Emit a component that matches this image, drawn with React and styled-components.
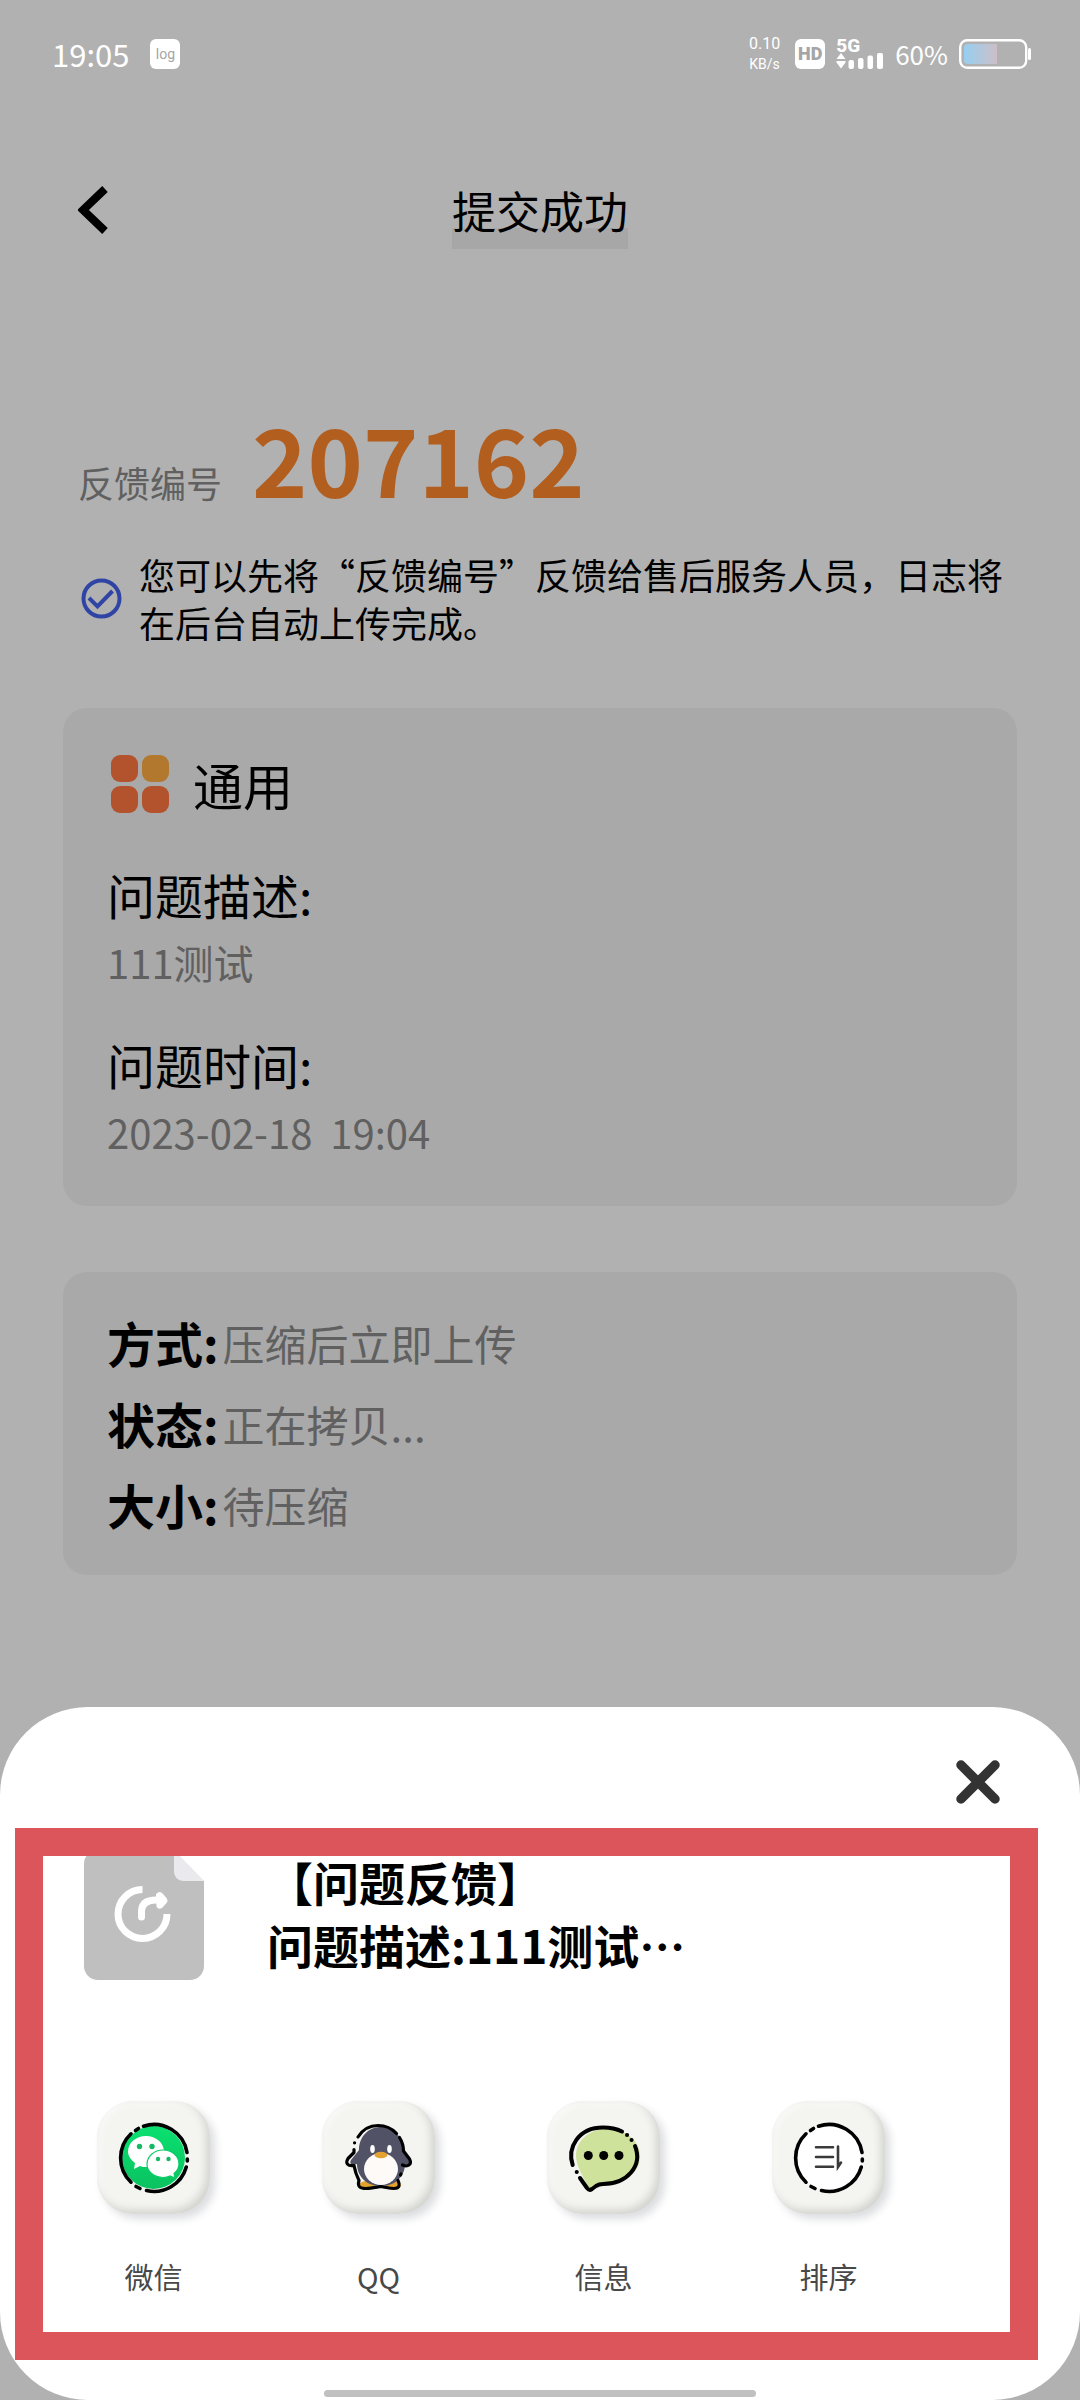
import React from 'react';
import styled, { createGlobalStyle } from 'styled-components';

const details = [
  { id: 0, label: '问题描述:', value: '111测试' },
  { id: 1, label: '问题时间:', value: '2023-02-18  19:04' },
];

const uploads = [
  { id: 0, label: '方式:', value: '压缩后立即上传' },
  { id: 1, label: '状态:', value: '正在拷贝...' },
  { id: 2, label: '大小:', value: '待压缩' },
];

const GlobalStyle = createGlobalStyle`
  * {
    box-sizing: border-box;
  }
  body {
    margin: 0;
    background: #b1b1b1;
    font-family: "Noto Sans CJK SC", sans-serif;
    color: #000;
  }
  h1, h2, p, dl, dt, dd, ul {
    margin: 0;
    padding: 0;
    font-weight: 400;
  }
  button {
    border: 0;
    padding: 0;
    background: none;
    font-family: inherit;
    cursor: pointer;
  }
  svg {
    display: block;
    flex-shrink: 0;
  }
`;

const Page = styled.div`
  min-height: 100vh;
  display: flex;
  flex-direction: column;
`;

const StatusBar = styled.div`
  display: flex;
  align-items: center;
  justify-content: space-between;
  height: 108px;
  padding: 0 48px 0 52px;
  color: #fff;
`;

const StatusGroup = styled.div`
  display: flex;
  align-items: center;
  gap: ${props => props.$gap}px;
`;

const Clock = styled.time`
  font-size: 31px;
  line-height: 40px;
`;

const Badge = styled.span`
  display: flex;
  align-items: center;
  justify-content: center;
  width: 30px;
  height: 30px;
  border-radius: 6px;
  background: #fff;
  color: #a5a5a5;
  font-family: Roboto, sans-serif;
  font-size: ${props => (props.$bold ? 18 : 14)}px;
  font-weight: ${props => (props.$bold ? 900 : 400)};
  line-height: 20px;
`;

const NetSpeed = styled.div`
  display: flex;
  flex-direction: column;
  padding-right: 4px;
  font-family: Roboto, sans-serif;
  font-size: 16px;
  line-height: 20px;
  text-align: center;
`;

const Unit = styled.span`
  font-size: 14px;
`;

const Signal = styled.div`
  display: flex;
  flex-direction: column;
  width: 48px;
  height: 30px;
  font-family: Roboto, sans-serif;
  font-size: 19px;
  font-weight: 800;
  line-height: 14px;
`;

const Percent = styled.span`
  font-size: 26px;
  line-height: 36px;
`;

const Header = styled.header`
  display: grid;
  grid-template-columns: 1fr auto 1fr;
  align-items: center;
  height: 204px;
  padding: 0 78px;
`;

const BackButton = styled.button`
  justify-self: start;
`;

const Title = styled.h1`
  font-size: 44px;
  line-height: 78px;
  background: linear-gradient(transparent 57px, #a7a7a7 57px);
`;

const Main = styled.main`
  display: flex;
  flex-direction: column;
`;

const CodeRow = styled.div`
  display: flex;
  align-items: baseline;
  gap: 30px;
  padding: 83px 78px 0;
`;

const CodeLabel = styled.span`
  font-size: 36px;
  color: #606060;
`;

const Code = styled.strong`
  font-size: 94px;
  line-height: 124px;
  color: #b25e1f;
`;

const Notice = styled.div`
  display: flex;
  align-items: center;
  gap: 17px;
  padding: 31px 60px 0 81px;
`;

const NoticeText = styled.p`
  font-size: 36px;
  line-height: 48px;
`;

const Card = styled.section`
  margin: ${props => props.$top}px 63px 0;
  padding: ${props => props.$pad};
  border-radius: 24px;
  background: #a9a9a9;
`;

const CardTitle = styled.div`
  display: flex;
  align-items: center;
  gap: 24px;
  padding-left: 4px;
  margin-bottom: 42px;
`;

const CardName = styled.h2`
  font-size: 50px;
  line-height: 68px;
`;

const Detail = styled.dl`
  & + & {
    margin-top: 34px;
  }
`;

const DetailLabel = styled.dt`
  font-size: 48px;
  line-height: 68px;
`;

const DetailValue = styled.dd`
  font-size: 40px;
  line-height: 68px;
  color: #606060;
  white-space: pre;
`;

const UploadList = styled.dl`
  display: grid;
  grid-template-columns: auto 1fr;
  column-gap: 4px;
`;

const UploadLabel = styled.dt`
  font-size: 48px;
  font-weight: 700;
  line-height: 81px;
`;

const UploadValue = styled.dd`
  font-size: 42px;
  line-height: 81px;
  color: #606060;
`;

const Sheet = styled.section`
  position: relative;
  margin-top: auto;
  padding-bottom: 3px;
  border-radius: 88px;
  background: #fff;
`;

const SheetTop = styled.div`
  display: flex;
  justify-content: flex-end;
  padding: 53px 80px 0;
`;

const ShareItem = styled.div`
  display: flex;
  gap: 63px;
  padding: 46px 84px 0;
`;

const ShareText = styled.p`
  font-size: 46px;
  font-weight: 700;
  line-height: 63px;
`;

const Apps = styled.ul`
  display: grid;
  grid-template-columns: repeat(4, 1fr);
  padding: 121px 139px 0 41px;
  list-style: none;
`;

const AppButton = styled.button`
  display: flex;
  flex-direction: column;
  align-items: center;
  gap: 42px;
  width: 100%;
  color: #484848;
  font-size: 29px;
  line-height: 40px;
`;

const Tile = styled.span`
  display: flex;
  align-items: center;
  justify-content: center;
  width: 113px;
  height: 113px;
  border-radius: 36px;
  background: #f4f5f1;
  box-shadow: 5px 5px 9px #dcdde0, inset -4px -4px 8px #d2d2ce, inset 3px 3px 6px #fafaf8;
`;

// red marker drawn over the share area
const Marker = styled.div`
  position: absolute;
  top: 121px;
  right: 42px;
  bottom: 40px;
  left: 15px;
  border: 28px solid #db555a;
  pointer-events: none;
`;

const HomeBar = styled.div`
  width: 40%;
  height: 7px;
  margin: 94px auto 0;
  border-radius: 4px;
  background: #c0c0c0;
`;

const SignalBars = () => (
  <svg width="48" height="16" viewBox="0 0 48 16" fill="#fff">
    <path d="M5 0l4.500 6h-9zM0.500 8h9v1.500l-4.500 6-4.500-6z" />
    <rect x="12.500" y="7" width="5.500" height="9" rx="2" />
    <rect x="22" y="5" width="5.500" height="11" rx="2" />
    <rect x="31.500" y="2.500" width="5.500" height="13.500" rx="2" />
    <rect x="41" y="0" width="6" height="16" rx="2" />
  </svg>
);

const Battery = () => (
  <svg width="73" height="30" viewBox="0 0 73 30">
    <defs>
      <linearGradient id="charge">
        <stop offset="0" stopColor="#96cff0" />
        <stop offset="1" stopColor="#cdbfc8" />
      </linearGradient>
    </defs>
    <rect x="1.200" y="1.200" width="66" height="27.600" rx="7" fill="none" stroke="#fff" strokeWidth="2.400" />
    <path d="M9 5h29v20H9a4 4 0 0 1-4-4V9a4 4 0 0 1 4-4z" fill="url(#charge)" />
    <rect x="69" y="9" width="3" height="12" rx="1.500" fill="#fff" />
  </svg>
);

const BackIcon = () => (
  <svg width="30" height="48" viewBox="0 0 30 48">
    <path d="M27 3L5 24l22 21" fill="none" stroke="#000" strokeWidth="8" />
  </svg>
);

const CheckIcon = () => (
  <svg width="41" height="41" viewBox="0 0 41 41" fill="none" stroke="#2f44a5" strokeWidth="4">
    <circle cx="20.500" cy="20.500" r="18" />
    <path d="M8 20l8.500 8.500L31.500 13" />
  </svg>
);

const GridIcon = () => (
  <svg width="58" height="58" viewBox="0 0 58 58" fill="#b3532e">
    <rect width="27" height="27" rx="9" />
    <rect x="31" width="27" height="27" rx="9" fill="#b2782e" />
    <rect y="31" width="27" height="27" rx="9" />
    <rect x="31" y="31" width="27" height="27" rx="9" />
  </svg>
);

const CloseIcon = () => (
  <svg width="44" height="44" viewBox="0 0 44 44">
    <path d="M5 5l34 34M39 5L5 39" fill="none" stroke="#333" strokeWidth="9.500" strokeLinecap="round" />
  </svg>
);

const FileIcon = () => (
  <svg width="120" height="130" viewBox="0 0 120 130">
    <path d="M14 0h76l30 31v85a14 14 0 0 1-14 14H14a14 14 0 0 1-14-14V14A14 14 0 0 1 14 0z" fill="#bfbfbf" />
    <path d="M90 0l30 31H99a9 9 0 0 1-9-9z" fill="#e9e9ee" />
    <path d="M90 0h30v31z" fill="#fff" />
    <g fill="none" stroke="#fff" strokeWidth="7">
      <path d="M83 64A24.500 24.500 0 1 1 58.500 39.500" />
      <path d="M57.500 67V61Q58 50 72 50" strokeLinecap="round" />
    </g>
    <path d="M72 44q4-4 7 0l3.500 4q2 3 0 5l-4 4.500q-4 3-6-1z" fill="#fff" />
  </svg>
);

const Ring = () => (
  <g fill="none" stroke="#000" strokeWidth="3.600" strokeLinecap="round">
    <path d="M29.500 8.200A33.400 33.400 0 0 1 73 34.500" />
    <path d="M72.300 49A33.400 33.400 0 0 1 32.500 72.500" />
    <path d="M17 64.200A33.400 33.400 0 0 1 17 15.800" />
    <path d="M21.500 12.500l3-2M73.300 41v2M22 68.500l4 2" />
  </g>
);

const WechatIcon = () => (
  <svg width="80" height="80" viewBox="0 0 80 80">
    <defs>
      <linearGradient id="wechat" x2="0" y2="1">
        <stop offset="0" stopColor="#0be070" />
        <stop offset="1" stopColor="#0ac260" />
      </linearGradient>
    </defs>
    <circle cx="39.500" cy="39.500" r="31.500" fill="url(#wechat)" />
    <path d="M32 18c10 0 18 7 18 15.500S42 49 32 49c-2 0-4 0-6-1l-6 3 1-6c-4-3-7-7-7-11.500C14 25 22 18 32 18z" fill="#fff" />
    <path d="M49 32c9 0 16 6 16 14 0 4-2 7-5 9.500l1 4.500-5-2c-2 1-5 1.500-7 1.500-9 0-16-6-16-13.500S40 32 49 32z" fill="#fff" stroke="#0acb65" strokeWidth="1.200" />
    <g fill="#16b866">
      <circle cx="25.500" cy="28.500" r="2.700" />
      <circle cx="38" cy="28.500" r="2.700" />
      <circle cx="44" cy="41" r="2.200" />
      <circle cx="54.500" cy="41" r="2.200" />
    </g>
    <Ring />
  </svg>
);

const QQIcon = () => (
  <svg width="80" height="80" viewBox="0 0 80 80">
    <ellipse cx="28" cy="67" rx="8" ry="4" fill="#e3a230" />
    <ellipse cx="54" cy="67" rx="8" ry="4" fill="#e3a230" />
    <path d="M42 9C29 9 20 19 20 32l-8 10c-2 4 1 6 6 4 0 10 7 22 24 22s24-12 24-22c5 2 7-1 5-5l-7-9C64 19 55 9 42 9z" fill="#525267" />
    <ellipse cx="42" cy="51" rx="17" ry="16" fill="#fefaf8" />
    <ellipse cx="33.500" cy="31" rx="2.300" ry="4" fill="#fff" />
    <ellipse cx="50.500" cy="31" rx="2.300" ry="4" fill="#fff" />
    <ellipse cx="42" cy="37" rx="6.500" ry="3.200" fill="#e3a230" />
    <g fill="none" stroke="#000" strokeWidth="3.200" strokeLinecap="round" strokeLinejoin="round">
      <path d="M19 19C24 11 32 7.500 39 7.500c8 0 14 3 18.500 8" />
      <path d="M60.500 19.500C64 25 64.500 29 64.500 33l6 8c3 6-2 8-7 6" />
      <path d="M15 31.500v3l-6 6c-3 5 0 8 6 7 1 6 3 11 5 15-2 7 2 8 7 8s9-1 15-2c6 1 9 2 13 2 6 0 6-4 4-8" />
      <path d="M15.500 24.800h.100M61.500 57l.500-1" />
    </g>
  </svg>
);

const MessageIcon = () => (
  <svg width="80" height="80" viewBox="0 0 80 80">
    <path d="M43 11c18 0 33 11 33 27S62 66 40 66c-4 0-8 4-14 6C19 58 12 48 12 38c0-16 14-27 31-27z" fill="#cfe29b" />
    <g fill="none" stroke="#000" strokeWidth="4" strokeLinecap="round" strokeLinejoin="round">
      <path d="M8.700 47C3 30 14 9.500 39 9.500c8 0 14 1.500 19 4" />
      <path d="M71 28c8 20-8 38-32 38q-4 0-7 2l-4 3q-3 2-5-1l-7-10" />
      <path d="M63 17h.100M67.500 22h.100M12.700 54h.100" />
    </g>
    <circle cx="24.300" cy="37.500" r="4.500" />
    <circle cx="39.700" cy="37.500" r="4.500" />
    <circle cx="55" cy="37.500" r="4.500" />
  </svg>
);

const SortIcon = () => (
  <svg width="80" height="80" viewBox="0 0 80 80">
    <circle cx="40" cy="40" r="32" fill="#fff" />
    <path d="M27 29.300h17M27 39h17M27 48.700h17M49 28.500v20.500l3-4.500" fill="none" stroke="#3a3a3a" strokeWidth="2.600" strokeLinecap="round" />
    <Ring />
  </svg>
);

const apps = [
  { id: 0, name: '微信', Icon: WechatIcon },
  { id: 1, name: 'QQ', Icon: QQIcon },
  { id: 2, name: '信息', Icon: MessageIcon },
  { id: 3, name: '排序', Icon: SortIcon },
];

function App() {
  return (
    <Page>
      <GlobalStyle />
      <StatusBar>
        <StatusGroup $gap={21}>
          <Clock>19:05</Clock>
          <Badge>log</Badge>
        </StatusGroup>
        <StatusGroup $gap={11}>
          <NetSpeed>
            <span>0.10</span>
            <Unit>KB/s</Unit>
          </NetSpeed>
          <Badge $bold>HD</Badge>
          <Signal>
            <span>5G</span>
            <SignalBars />
          </Signal>
          <Percent>60%</Percent>
          <Battery />
        </StatusGroup>
      </StatusBar>

      <Header>
        <BackButton aria-label="返回">
          <BackIcon />
        </BackButton>
        <Title>提交成功</Title>
      </Header>

      <Main>
        <CodeRow>
          <CodeLabel>反馈编号</CodeLabel>
          <Code>207162</Code>
        </CodeRow>
        <Notice>
          <CheckIcon />
          <NoticeText>您可以先将“反馈编号”反馈给售后服务人员，日志将在后台自动上传完成。</NoticeText>
        </Notice>

        <Card $top={62} $pad="42px 44px 40px">
          <CardTitle>
            <GridIcon />
            <CardName>通用</CardName>
          </CardTitle>
          {details.map(item => (
            <Detail key={item.id}>
              <DetailLabel>{item.label}</DetailLabel>
              <DetailValue>{item.value}</DetailValue>
            </Detail>
          ))}
        </Card>

        <Card $top={66} $pad="30px 44px">
          <UploadList>
            {uploads.map(item => (
              <React.Fragment key={item.id}>
                <UploadLabel>{item.label}</UploadLabel>
                <UploadValue>{item.value}</UploadValue>
              </React.Fragment>
            ))}
          </UploadList>
        </Card>
      </Main>

      <Sheet>
        <SheetTop>
          <button aria-label="关闭">
            <CloseIcon />
          </button>
        </SheetTop>
        <ShareItem>
          <FileIcon />
          <ShareText>
            【问题反馈】
            <br />
            问题描述:111测试…
          </ShareText>
        </ShareItem>
        <Apps>
          {apps.map(({ id, name, Icon }) => (
            <li key={id}>
              <AppButton>
                <Tile>
                  <Icon />
                </Tile>
                {name}
              </AppButton>
            </li>
          ))}
        </Apps>
        <HomeBar />
        <Marker />
      </Sheet>
    </Page>
  );
}

export default App;
